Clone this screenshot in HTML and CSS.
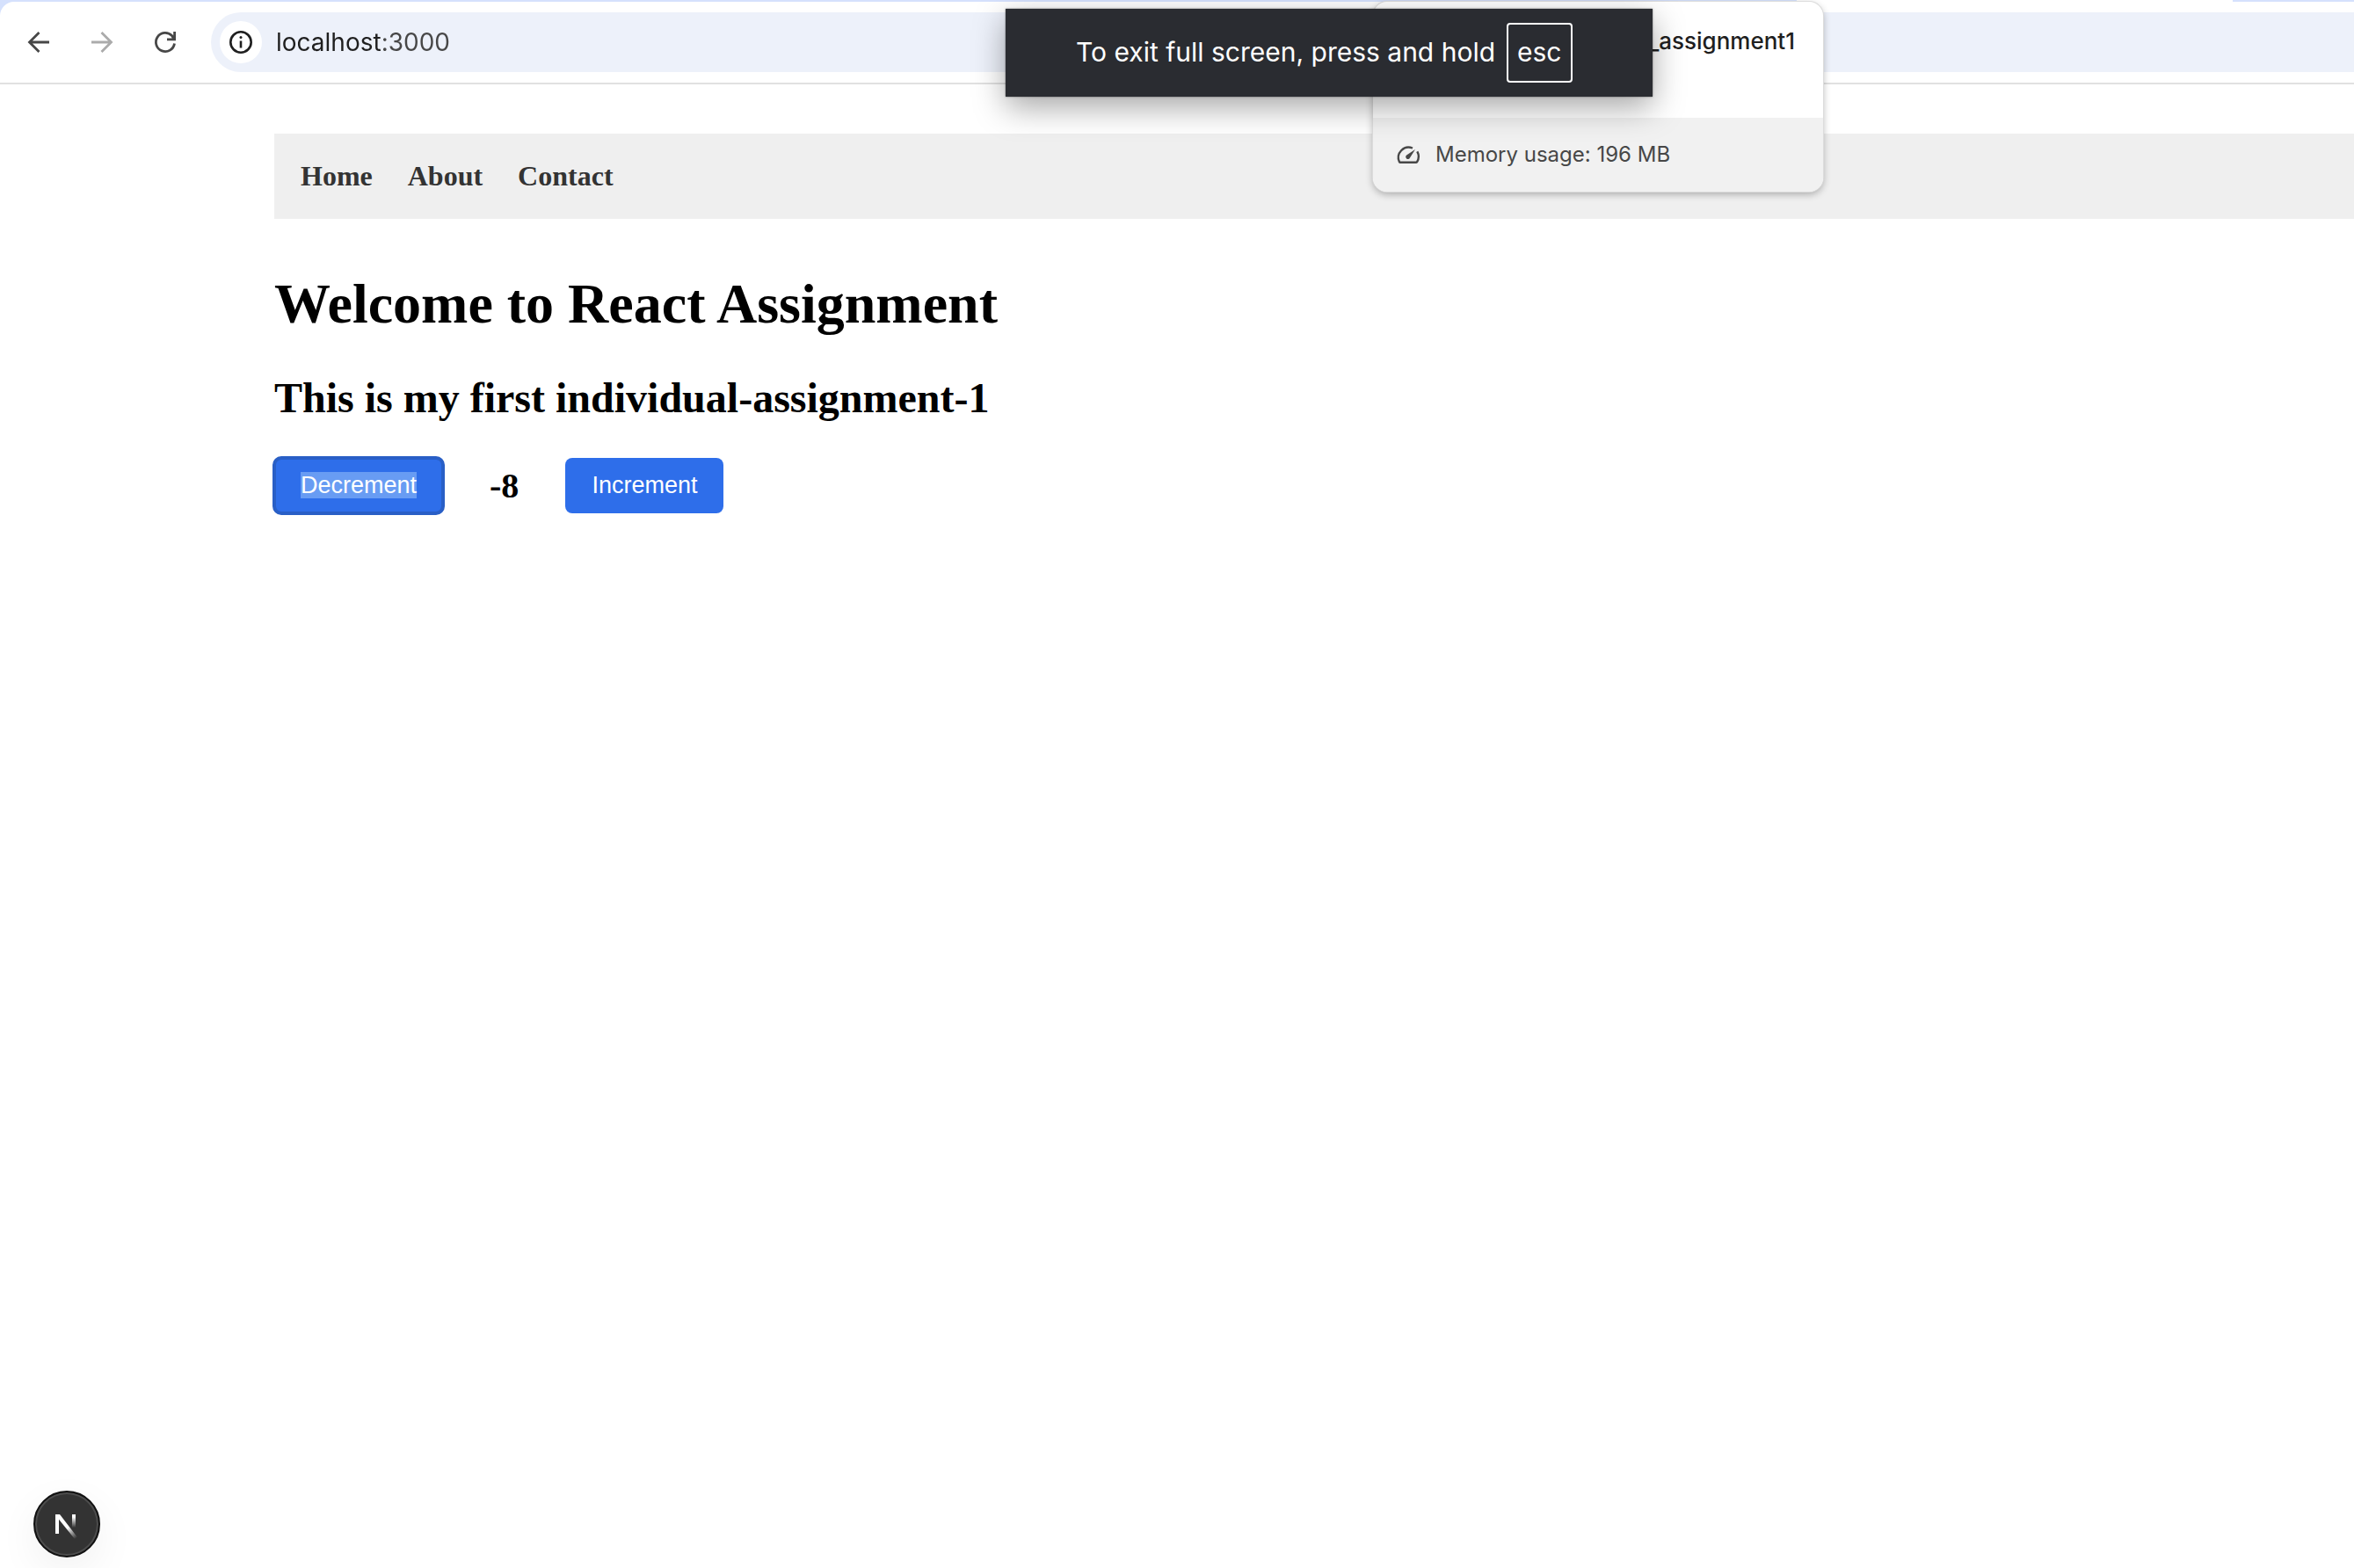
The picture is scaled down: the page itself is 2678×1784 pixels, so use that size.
FILE: index.html
```html
<!DOCTYPE html>
<html lang="en">
<head>
<meta charset="utf-8">
<title>localhost:3000</title>
<link rel="stylesheet" href="styles.css">
</head>
<body>
<div class="tabstrip"><span class="tab"></span></div>
<header class="toolbar">
  <div class="controls">
    <button class="tool" type="button" aria-label="Back">
      <svg viewBox="0 0 24 24"><path d="M24 12H2M12.500 1L1.500 12l11 11" fill="none" stroke="#474747" stroke-width="2.800"/></svg>
    </button>
    <button class="tool" type="button" aria-label="Forward" disabled>
      <svg viewBox="0 0 24 24"><path d="M0 12h22M11.500 1l11 11-11 11" fill="none" stroke="#ababab" stroke-width="2.800"/></svg>
    </button>
    <button class="tool" type="button" aria-label="Reload">
      <svg viewBox="0 0 24 24"><path d="M22.500 13.500A10.600 10.600 0 1 1 19.500 4.500L22 8.500M22.600 0v8.800H14" fill="none" stroke="#474747" stroke-width="2.800"/></svg>
    </button>
  </div>
  <div class="address">
    <button class="site-info" type="button" aria-label="View site information">
      <svg viewBox="0 0 26 26"><circle cx="13" cy="13" r="11.700" fill="none" stroke="#1f1f1f" stroke-width="2.600"/><path d="M13 11.500v8" stroke="#1f1f1f" stroke-width="2.600"/><circle cx="13" cy="7.600" r="1.500" fill="#1f1f1f"/></svg>
    </button>
    <input class="url" type="text" aria-label="Address" value="localhost:3000">
  </div>
</header>

<main class="page">
  <nav class="nav">
    <a href="#home">Home</a>
    <a href="#about">About</a>
    <a href="#contact">Contact</a>
  </nav>
  <h1 class="title">Welcome to React Assignment</h1>
  <h2 class="subtitle">This is my first individual-assignment-1</h2>
  <div class="counter">
    <button class="btn btn-focused" type="button"><span class="selected">Decrement</span></button>
    <strong class="count">-8</strong>
    <button class="btn" type="button">Increment</button>
  </div>
</main>

<aside class="tab-card">
  <div class="tab-card-title">_assignment1</div>
  <div class="tab-card-memory">
    <svg viewBox="0 0 26 20"><path d="M18 2.500A11.700 11.700 0 0 0 3 18.300Q3.300 18.700 4 18.700H22Q22.700 18.700 23 18.300A11.700 11.700 0 0 0 23.300 6.300" fill="none" stroke="#474747" stroke-width="2.400"/><path d="M21 4L15 13.500A2.500 2.500 0 1 1 11.200 10.500Z" fill="#474747"/></svg>
    <span>Memory usage: 196 MB</span>
  </div>
</aside>

<div class="exit-hint" role="status">
  <span>To exit full screen, press and hold</span>
  <kbd class="key">esc</kbd>
</div>

<button class="dev-badge" type="button" aria-label="Open developer tools">
  <svg viewBox="0 -5 26 33">
    <defs>
      <linearGradient id="diagonal" x1="14" y1="15" x2="24" y2="27" gradientUnits="userSpaceOnUse"><stop offset="0" stop-color="#fff"/><stop offset="1" stop-color="#fff" stop-opacity="0"/></linearGradient>
      <linearGradient id="stem" x1="0" y1="0" x2="0" y2="15" gradientUnits="userSpaceOnUse"><stop offset="0.200" stop-color="#fff"/><stop offset="1" stop-color="#fff" stop-opacity="0"/></linearGradient>
    </defs>
    <path d="M0 0h4v22H0z" fill="#fff"/>
    <path d="M0 0h5L25 26l-3 2L1 2z" fill="url(#diagonal)"/>
    <path d="M19 0h4v15h-4z" fill="url(#stem)"/>
  </svg>
</button>
</body>
</html>
```
FILE: styles.css
```css
* { box-sizing: border-box; }

body {
  margin: 0;
  min-height: 100vh;
  position: relative;
  background: linear-gradient(#d5e1fd 0 20px, #fff 20px);
  font-family: "Liberation Serif", "Times New Roman", serif;
  color: #000;
}

button { border: 0; padding: 0; background: none; }
svg { display: block; overflow: visible; }

/* Browser chrome */
.tabstrip {
  display: flex;
  justify-content: flex-end;
  height: 2px;
  padding-right: 138px;
}
.tab { width: 496px; background: #fff; }

.toolbar {
  display: flex;
  align-items: center;
  height: 94px;
  padding-left: 32px;
  border-bottom: 2px solid #e1e1e1;
  border-top-left-radius: 16px;
  background: #fff;
}
.controls { display: flex; gap: 48px; }
.tool { width: 24px; height: 24px; }

.address {
  flex: 1;
  display: flex;
  align-items: center;
  gap: 16px;
  height: 68px;
  margin-left: 40px;
  padding-left: 10px;
  border-radius: 34px 0 0 34px;
  background: #edf1fa;
}
.site-info {
  display: grid;
  place-items: center;
  width: 48px;
  height: 48px;
  border-radius: 50%;
  background: #fff;
}
.site-info svg { width: 26px; height: 26px; }
.url {
  flex: 1;
  border: 0;
  padding: 0;
  outline: 0;
  font: 28px/36px Inter, sans-serif;
  color: transparent;
  background: linear-gradient(to right, #1f1f1f 120px, #474747 120px);
  background-clip: text;
}

/* Page */
.page { padding: 56px 0 0 312px; }
.nav {
  display: flex;
  gap: 40px;
  padding: 30px;
  background: #efefef;
}
.nav a {
  font-size: 32px;
  line-height: 37px;
  font-weight: bold;
  color: #333;
  text-decoration: none;
}
.title { margin: 60px 0 42px; font-size: 64px; line-height: 74px; }
.subtitle { margin: 0 0 41px; font-size: 48px; line-height: 55px; }

.counter { display: flex; align-items: center; gap: 53px; }
.btn {
  padding: 16px 30px;
  border-radius: 8px;
  background: #2e6eea;
  color: #fff;
  font: 27px/31px "Liberation Sans", Arial, sans-serif;
}
.btn-focused { outline: 4px solid #295fc6; outline-offset: -2px; }
.selected { background: #689cf3; }
.count { font-size: 40px; line-height: 46px; }

/* Tab hover card */
.tab-card {
  position: absolute;
  top: 2px;
  left: 1562px;
  width: 512px;
  border-radius: 16px;
  overflow: hidden;
  background: #fff;
  box-shadow: 0 0 0 1px #dcdcdc, 0 3px 8px rgba(0, 0, 0, 0.3);
  font-family: Inter, sans-serif;
}
.tab-card-title {
  height: 132px;
  padding: 27px 32px;
  font-size: 26px;
  line-height: 36px;
  font-weight: 500;
  text-align: right;
  color: #1f1f1f;
}
.tab-card-memory {
  display: flex;
  align-items: center;
  gap: 18px;
  height: 84px;
  padding: 0 27px;
  background: #f1f1f1;
  color: #474747;
  font-size: 24px;
  line-height: 32px;
}
.tab-card-memory svg { width: 26px; height: 20px; }

/* Full screen hint */
.exit-hint {
  position: absolute;
  top: 10px;
  left: 1144px;
  display: flex;
  align-items: center;
  gap: 13px;
  width: 736px;
  height: 100px;
  padding-left: 80px;
  background: #2a2c31;
  box-shadow: 0 0 2px rgba(0, 0, 0, 0.5), 0 12px 36px rgba(0, 0, 0, 0.35);
  color: #fff;
  font: 30px/38px Inter, sans-serif;
  white-space: nowrap;
}
.exit-hint span { padding-bottom: 2px; }
.key {
  padding: 12px 10px 14px;
  border: 2px solid #fff;
  border-radius: 4px;
  font: inherit;
}

/* Framework badge */
.dev-badge {
  position: fixed;
  left: 38px;
  bottom: 12px;
  display: grid;
  place-items: center;
  width: 76px;
  height: 76px;
  border: 2px solid #111;
  border-radius: 50%;
  background: #333;
  box-shadow: inset 0 0 0 2px #4d4d4d, 0 16px 48px rgba(0, 0, 0, 0.06);
}
.dev-badge svg { width: 26px; height: 33px; }
```
